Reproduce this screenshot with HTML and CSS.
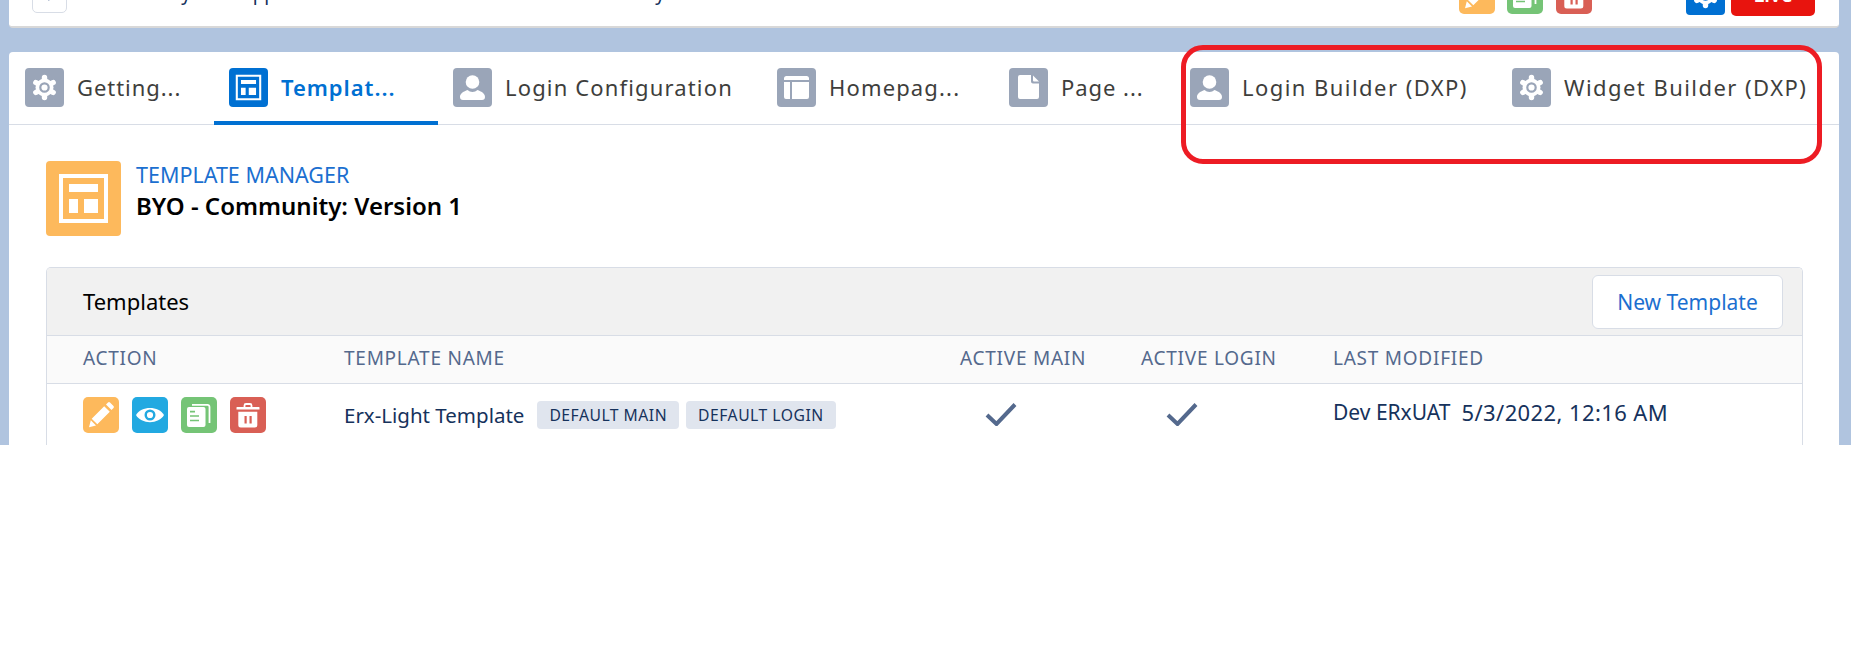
FILE: index.html
```html
<!DOCTYPE html>
<html lang="en">
<head>
<meta charset="utf-8">
<title>Template Manager</title>
<link rel="stylesheet" href="styles.css">
</head>
<body>
<svg class="defs" width="0" height="0" aria-hidden="true">
  <symbol id="i-gear" viewBox="0 0 39 39">
    <g fill="#fff">
      <circle cx="19.5" cy="19.5" r="9"/>
      <g stroke="#fff" stroke-width="5.4" stroke-linecap="round">
        <path d="M19.5 9.5v20"/>
        <path d="M10.84 14.5l17.32 10"/>
        <path d="M10.84 24.5l17.32-10"/>
      </g>
    </g>
    <circle class="gear-hole" cx="19.5" cy="19.5" r="4.2" fill="none" stroke="currentColor" stroke-width="2.2"/>
  </symbol>
  <symbol id="i-template" viewBox="0 0 75 75">
    <path fill="#fff" fill-rule="evenodd" d="M13 13h49v49H13zM17 17v41h41V17z"/>
    <path fill="#fff" d="M23 23h29v8H23zM23 38h9v14h-9zM38 38h14v14H38z"/>
  </symbol>
  <symbol id="i-person" viewBox="0 0 39 39">
    <circle cx="19.5" cy="14" r="6.8" fill="#fff"/>
    <path fill="#fff" d="M7 29c0-4 4-5.500 7.500-7 1.500 1.300 3 2 5 2s3.500-.7 5-2c3.500 1.500 7.500 3 7.500 7 0 1.800-1 3-3 3H10c-2 0-3-1.200-3-3z"/>
  </symbol>
  <symbol id="i-home" viewBox="0 0 39 39">
    <path fill="#fff" d="M9.500 8h20a2.500 2.500 0 0 1 2.500 2.500V12H7v-1.500A2.500 2.500 0 0 1 9.500 8zM7 14h6v17H9a2 2 0 0 1-2-2zM15 14h17v15a2 2 0 0 1-2 2H15z"/>
  </symbol>
  <symbol id="i-page" viewBox="0 0 39 39">
    <path fill="#fff" d="M11 7h11v6.500a2 2 0 0 0 2 2h6V29a2 2 0 0 1-2 2H11a2 2 0 0 1-2-2V9a2 2 0 0 1 2-2z"/>
    <path fill="#fff" d="M24 7.500l6 6h-5a1 1 0 0 1-1-1z"/>
  </symbol>
  <symbol id="i-pencil" viewBox="0 0 36 36">
    <path fill="#fff" d="M8.700 21.700L21.200 9.200l5.600 5.600-12.500 12.500zM7.800 23.200l5.200 5.200L6 30.200zM23 7.500l2-2a1.500 1.500 0 0 1 2 0l3.500 3.500a1.500 1.500 0 0 1 0 2l-2 2z"/>
  </symbol>
  <symbol id="i-eye" viewBox="0 0 36 36">
    <path fill="#fff" d="M4 18C9 8.500 27 8.500 32 18 27 27.500 9 27.500 4 18z"/>
    <circle cx="18" cy="18" r="4.300" fill="#fff" stroke="#22a9e1" stroke-width="2.400"/>
  </symbol>
  <symbol id="i-copy" viewBox="0 0 36 36">
    <path fill="none" stroke="#fff" stroke-width="1.800" d="M11 7.900h15.500a2 2 0 0 1 2 2V26"/>
    <path fill="#fff" d="M8 10h14.500a2 2 0 0 1 2 2v16a2 2 0 0 1-2 2H8a2 2 0 0 1-2-2V12a2 2 0 0 1 2-2z"/>
    <path stroke="#75c476" stroke-width="1.700" d="M9 14.700h5M9 19h9M9 23.500h9"/>
  </symbol>
  <symbol id="i-trash" viewBox="0 0 36 36">
    <path fill="none" stroke="#fff" stroke-width="1.800" d="M14.500 10V8.500a1.500 1.500 0 0 1 1.500-1.500h4a1.500 1.500 0 0 1 1.500 1.500V10"/>
    <path fill="#fff" d="M7 10h22a.500.500 0 0 1 .500.500V12.500H6.500v-2A.500.500 0 0 1 7 10zM8.300 14.700h19V28a2.500 2.500 0 0 1-2.500 2.500h-14A2.500 2.500 0 0 1 8.300 28z"/>
    <path fill="#d95f55" d="M14.500 19h2.200v7.500h-2.200zM19.500 19h2.200v7.500h-2.200z"/>
  </symbol>
</svg>

<div class="desk">
  <header class="topbar">
    <span class="back-box"><svg class="back-chevron" viewBox="0 0 10 10"><path d="M2 0h4L3 6H1z"/></svg></span>
    <span class="top-title">Community Web Application</span>
    <span class="top-title top-title-end">Library</span>
    <span class="tile tile-36 tile-orange top-a"><svg class="fill"><use href="#i-pencil"/></svg></span>
    <span class="tile tile-36 tile-green top-b"><svg class="fill"><use href="#i-copy"/></svg></span>
    <span class="tile tile-36 tile-red top-c"><svg class="fill"><use href="#i-trash"/></svg></span>
    <span class="tile tile-39 tile-active top-gear"><svg class="fill hole-blue"><use href="#i-gear"/></svg></span>
    <span class="live">Live</span>
  </header>

  <main class="panel">
    <nav class="tabs">
      <a class="tab tab-getting tab-short"><span class="tile tile-39 tile-gray"><svg class="fill hole-gray"><use href="#i-gear"/></svg></span><span class="tab-text">Getting...</span></a>
      <a class="tab tab-template tab-active tab-short"><span class="tile tile-39 tile-active"><svg class="fill"><use href="#i-template"/></svg></span><span class="tab-text">Templat...</span></a>
      <a class="tab tab-login"><span class="tile tile-39 tile-gray"><svg class="fill"><use href="#i-person"/></svg></span><span class="tab-text">Login Configuration</span></a>
      <a class="tab tab-home"><span class="tile tile-39 tile-gray"><svg class="fill"><use href="#i-home"/></svg></span><span class="tab-text">Homepag...</span></a>
      <a class="tab tab-page tab-short"><span class="tile tile-39 tile-gray"><svg class="fill"><use href="#i-page"/></svg></span><span class="tab-text">Page ...</span></a>
      <a class="tab tab-lb tab-dxp"><span class="tile tile-39 tile-gray"><svg class="fill"><use href="#i-person"/></svg></span><span class="tab-text">Login Builder (DXP)</span></a>
      <a class="tab tab-wb tab-dxp"><span class="tile tile-39 tile-gray"><svg class="fill hole-gray"><use href="#i-gear"/></svg></span><span class="tab-text">Widget Builder (DXP)</span></a>
    </nav>

    <section class="page-head">
      <span class="tile tile-75 tile-orange"><svg class="fill"><use href="#i-template"/></svg></span>
      <div class="page-titles">
        <div class="eyebrow">TEMPLATE MANAGER</div>
        <h1 class="page-title">BYO - Community: Version 1</h1>
      </div>
    </section>

    <section class="table-card">
      <div class="table-head">
        <h2 class="table-title">Templates</h2>
        <button class="btn">New Template</button>
      </div>
      <div class="row row-head">
        <div>ACTION</div>
        <div>TEMPLATE NAME</div>
        <div>ACTIVE MAIN</div>
        <div>ACTIVE LOGIN</div>
        <div>LAST MODIFIED</div>
      </div>
      <div class="row row-body">
        <div class="actions">
          <span class="tile tile-36 tile-orange"><svg class="fill"><use href="#i-pencil"/></svg></span>
          <span class="tile tile-36 tile-blue"><svg class="fill"><use href="#i-eye"/></svg></span>
          <span class="tile tile-36 tile-green"><svg class="fill"><use href="#i-copy"/></svg></span>
          <span class="tile tile-36 tile-red"><svg class="fill"><use href="#i-trash"/></svg></span>
        </div>
        <div class="name-cell">
          <span class="name">Erx-Light Template</span>
          <span class="badge">DEFAULT MAIN</span>
          <span class="badge">DEFAULT LOGIN</span>
        </div>
        <div class="check-cell"><svg class="check" viewBox="0 0 32 24"><path d="M2 13l9.500 9L30 2.500" /></svg></div>
        <div class="check-cell"><svg class="check" viewBox="0 0 32 24"><path d="M2 13l9.500 9L30 2.500" /></svg></div>
        <div class="modified"><span class="mod-user">Dev ERxUAT</span><span class="mod-date">5/3/2022, 12:16 AM</span></div>
      </div>
    </section>
  </main>
  <div class="callout"></div>
</div>
</body>
</html>
```
FILE: styles.css
```css
* { box-sizing: border-box; }
html, body { margin: 0; padding: 0; background: #fff; }
body { font-family: "Noto Sans", "Open Sans", sans-serif; color: #16325c; }
.defs { display: block; height: 0; }

.desk {
  position: relative;
  height: 445px;
  padding: 0 12px 0 9px;
  background: #b0c4df;
  overflow: hidden;
}

.topbar {
  display: flex;
  align-items: flex-end;
  height: 28px;
  margin-bottom: 24px;
  padding-left: 23px;
  background: #fff;
  border-bottom: 2px solid #d8d8d8;
  border-radius: 0 0 4px 4px;
}
.back-box {
  flex: none;
  display: flex;
  align-items: flex-end;
  justify-content: center;
  width: 35px;
  height: 36px;
  margin-bottom: 13px;
  padding-bottom: 10px;
  background: #fff;
  border: 1px solid #d8dde6;
  border-radius: 5px;
}
.back-chevron { width: 6px; height: 4px; fill: #2a4a7f; }
.top-title {
  flex: none;
  margin: 0 0 21px 20px;
  font-size: 19px;
  line-height: 24px;
  color: #16325c;
}
.top-title-end { margin-left: 262px; }
.top-a { margin-left: auto; margin-bottom: 12px; }
.top-b { margin-left: 12px; margin-bottom: 12px; }
.top-c { margin-left: 13px; margin-bottom: 12px; }
.top-gear { margin-left: 94px; margin-bottom: 11px; }
.live {
  flex: none;
  display: flex;
  align-items: flex-end;
  justify-content: center;
  width: 84px;
  height: 36px;
  margin: 0 24px 10px 6px;
  padding-bottom: 11px;
  background: #e8140e;
  border-radius: 5px;
  color: #fff;
  font-size: 20px;
  font-weight: 600;
  line-height: 20px;
}

.tile { flex: none; display: block; }
.tile-36 { width: 36px; height: 36px; border-radius: 5px; }
.tile-39 { width: 39px; height: 39px; border-radius: 4px; }
.tile-75 { width: 75px; height: 75px; border-radius: 4px; }
.tile-orange { background: #fdb95c; }
.tile-blue { background: #22a9e1; }
.tile-green { background: #75c476; }
.tile-red { background: #d95f55; }
.tile-gray { background: #9aa5b8; }
.tile-active { background: #0070d2; }
.fill { display: block; width: 100%; height: 100%; }
.hole-gray { color: #9aa5b8; }
.hole-blue { color: #0070d2; }

.panel {
  height: 393px;
  background: #fff;
  border-radius: 4px 4px 0 0;
  overflow: hidden;
}

.tabs {
  display: flex;
  height: 73px;
  border-bottom: 1px solid #d8dde6;
}
.tab {
  flex: none;
  display: flex;
  align-items: flex-start;
  height: 73px;
  padding: 16px 0 0 15px;
}
.tab-getting { width: 205px; padding-left: 16px; }
.tab-template { width: 224px; }
.tab-login { width: 324px; }
.tab-home { width: 232px; }
.tab-page { width: 181px; }
.tab-lb { width: 322px; }
.tab-wb { width: 328px; }
.tab-active { border-bottom: 4px solid #0070d2; }
.tab-text {
  margin: 0 0 0 13px;
  font-size: 22px;
  line-height: 39px;
  letter-spacing: 1.15px;
  color: #3e3e3c;
  white-space: nowrap;
}
.tab-short .tab-text { letter-spacing: 0.95px; }
.tab-dxp .tab-text { letter-spacing: 1.45px; }
.tab-active .tab-text { color: #0070d2; font-weight: 600; }

.page-head {
  display: flex;
  gap: 15px;
  padding: 36px 0 0 37px;
  height: 142px;
}
.page-titles { padding-top: 1px; }
.eyebrow {
  font-size: 21.5px;
  line-height: 26px;
  color: #1b6fd0;
}
.page-title {
  margin: 3px 0 0;
  font-size: 24px;
  line-height: 30px;
  font-weight: 600;
  color: #000;
}

.table-card {
  margin: 0 36px 0 37px;
  height: 178px;
  border: 1px solid #d8dde6;
  border-bottom: 0;
  border-radius: 5px 5px 0 0;
  background: #fff;
  overflow: hidden;
}
.table-head {
  display: flex;
  align-items: center;
  justify-content: space-between;
  height: 68px;
  padding: 0 19px 0 36px;
  background: #f1f1f1;
  border-bottom: 1px solid #d8dde6;
}
.table-title {
  margin: -2px 0 0;
  font-size: 22px;
  font-weight: 400;
  color: #000;
}
.btn {
  width: 191px;
  height: 54px;
  padding: 0;
  background: #fff;
  border: 1px solid #d8dde6;
  border-radius: 6px;
  color: #1b6fd0;
  font: 400 21px "Noto Sans", sans-serif;
}
.row {
  display: grid;
  grid-template-columns: 261px 616px 181px 192px 1fr;
  padding-left: 36px;
}
.row-head {
  align-items: center;
  height: 48px;
  padding-bottom: 4px;
  background: #fafafa;
  border-bottom: 1px solid #d8dde6;
  font-size: 19px;
  letter-spacing: 0.75px;
  color: #54698d;
}
.row-body { padding-top: 13px; }
.actions { display: flex; gap: 13px; }
.name-cell { display: flex; align-items: center; height: 36px; }
.name { font-size: 20.5px; }
.badge {
  display: block;
  height: 28px;
  margin-left: 7px;
  padding: 0 12px;
  background: #e0e5ee;
  border-radius: 4px;
  font-size: 15.7px;
  line-height: 28px;
  letter-spacing: 0.5px;
  color: #16325c;
}
.name + .badge { margin-left: 13px; }
.check-cell { padding: 5px 0 0 25px; }
.check {
  display: block;
  width: 32px;
  height: 24px;
  fill: none;
  stroke: #54698d;
  stroke-width: 4;
}
.modified { display: flex; gap: 11px; font-size: 22px; line-height: 30px; white-space: nowrap; }
.mod-user { font-size: 21px; }
.mod-date { letter-spacing: 0.4px; }

.callout {
  position: absolute;
  left: 1181px;
  top: 45px;
  width: 641px;
  height: 119px;
  border: 5px solid #ed1c24;
  border-radius: 22px;
}
```
